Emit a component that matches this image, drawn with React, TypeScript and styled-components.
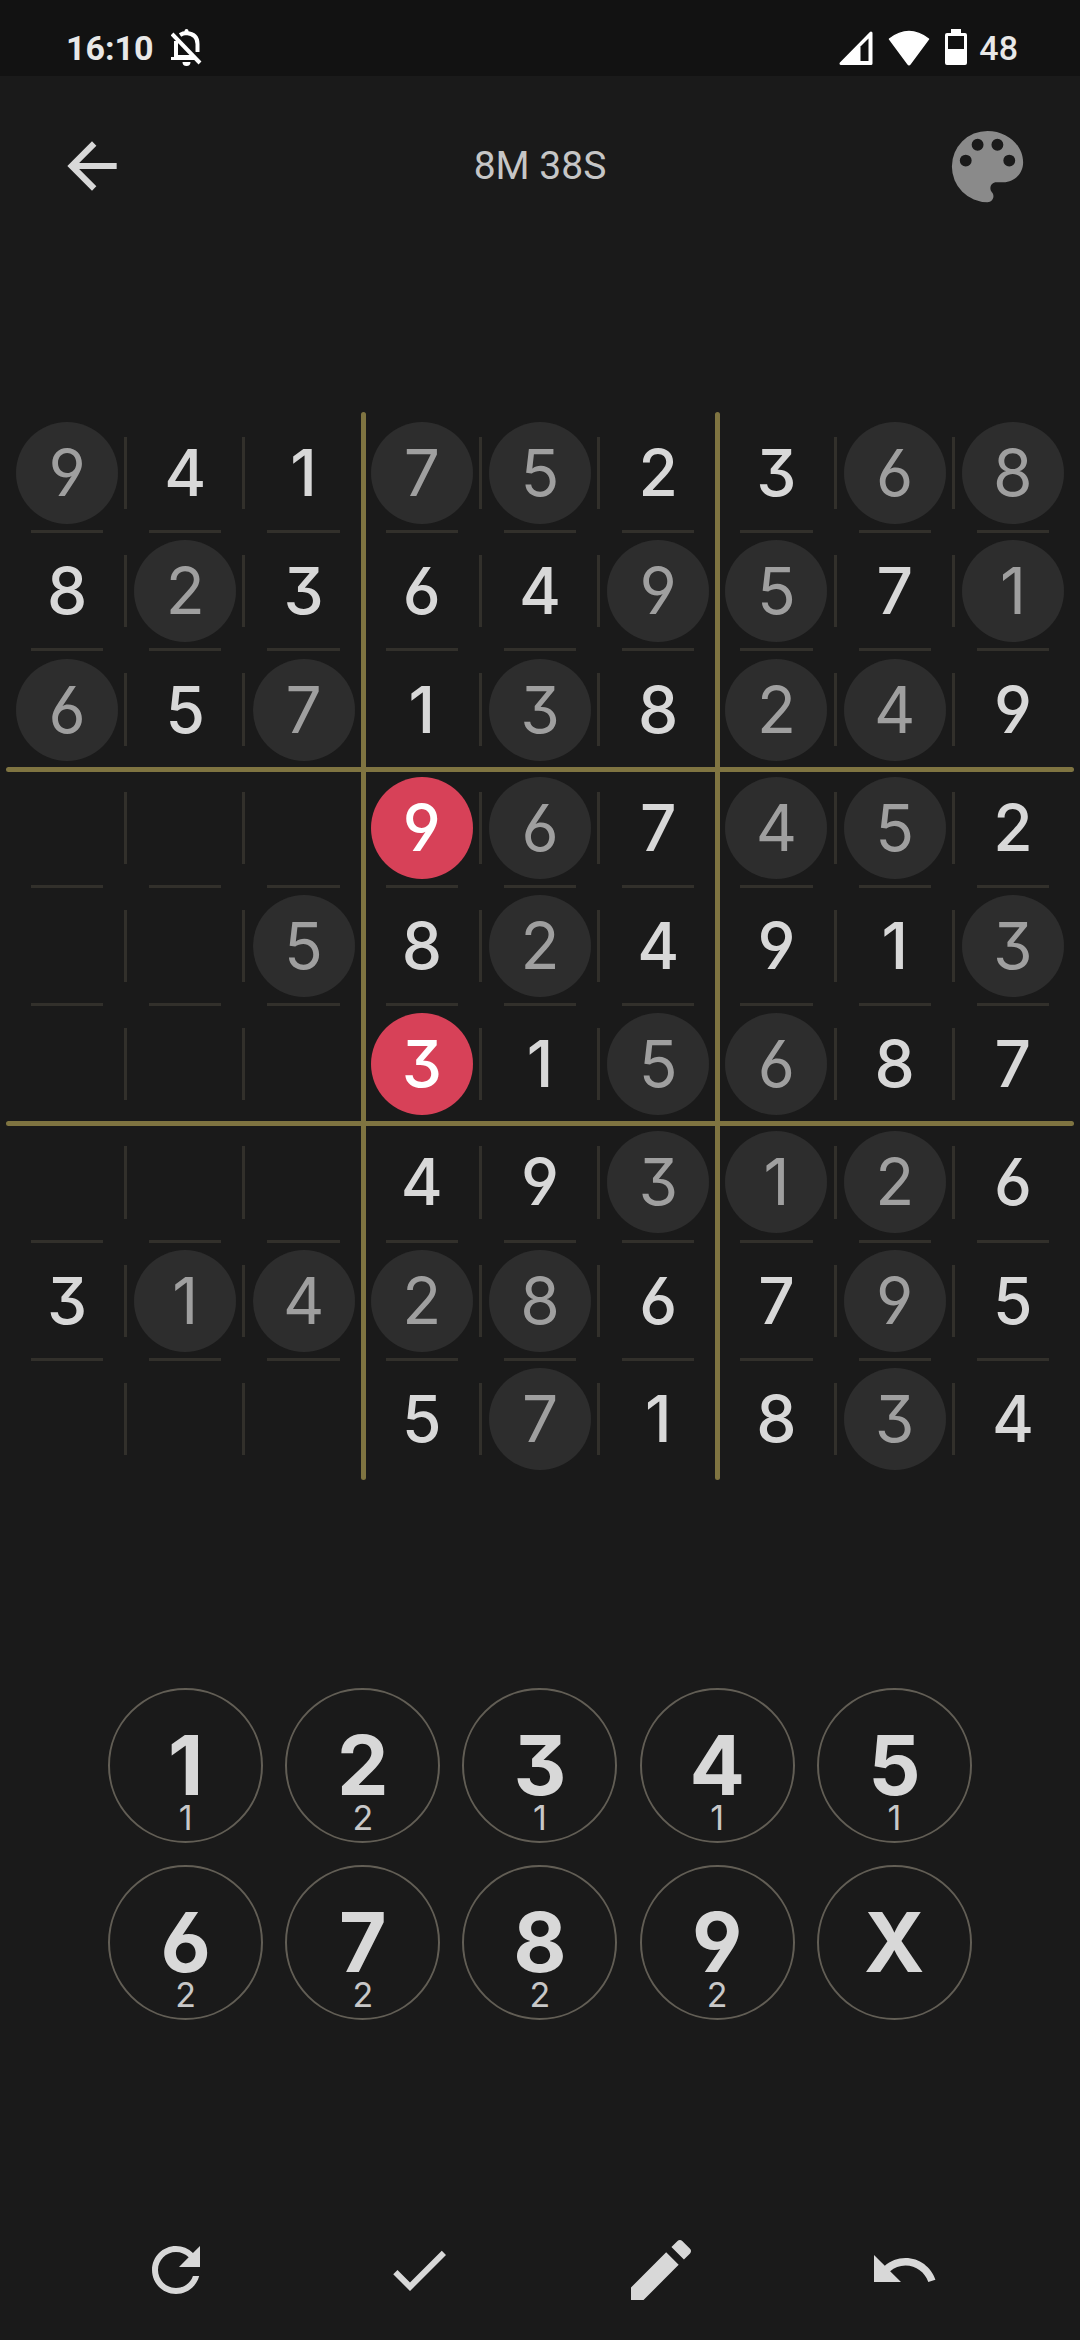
import React from 'react';
import styled, { createGlobalStyle } from 'styled-components';

const colors = {
  page: '#1a1a1a',
  status: '#121212',
  ink: '#d8d8d8',
  muted: '#9f9f9f',
  given: '#2d2d2d',
  gold: '#7f7441',
  hair: '#32302b',
  ring: '#625e55',
  selected: '#d74158',
};

const GlobalStyle = createGlobalStyle`
  *, *::before, *::after { box-sizing: border-box; }
  body { margin: 0; background: ${colors.page}; }
`;

const Screen = styled.div`
  display: flex;
  flex-direction: column;
  min-height: 100vh;
  background: ${colors.page};
  color: ${colors.ink};
  font-family: Inter, Roboto, sans-serif;
  font-feature-settings: 'cv03', 'cv04', 'cv09';
`;

const StatusBar = styled.div`
  display: flex;
  align-items: center;
  justify-content: space-between;
  height: 76px;
  padding: 20px 62px 0 66px;
  background: ${colors.status};
  color: #e8e8e8;
  font-family: Roboto, sans-serif;
  font-size: 34px;
  line-height: 40px;
`;

const StatusGroup = styled.div<{ $gap: number }>`
  display: flex;
  align-items: center;
  gap: ${(p) => p.$gap}px;
`;

const Clock = styled.time`
  font-weight: 700;
`;

const Percent = styled.span`
  font-weight: 500;
`;

const Header = styled.header`
  display: flex;
  align-items: center;
  justify-content: space-between;
  height: 180px;
  padding: 0 44px;
`;

const IconButton = styled.button<{ $dim?: boolean }>`
  display: flex;
  align-items: center;
  justify-content: center;
  width: 96px;
  height: 96px;
  padding: 0;
  border: 0;
  background: none;
  color: ${(p) => (p.$dim ? '#8a8a8a' : colors.ink)};
`;

const Timer = styled.h1`
  margin: 0;
  color: #c6c6c6;
  font-family: Roboto, sans-serif;
  font-size: 39px;
  font-weight: 400;
  line-height: 48px;
`;

const Board = styled.main`
  display: grid;
  grid-template-columns: repeat(3, 1fr);
  position: relative;
  margin: 158px 8px 0;
  aspect-ratio: 1;
`;

const Box = styled.div`
  display: grid;
  grid-template-columns: repeat(3, 1fr);
  grid-template-rows: repeat(3, 1fr);
  aspect-ratio: 1;
`;

const Cell = styled.button<{ $right: boolean; $bottom: boolean }>`
  display: flex;
  align-items: center;
  justify-content: center;
  position: relative;
  padding: 0;
  border: 0;
  background: none;
  color: inherit;
  font: inherit;
  font-feature-settings: inherit;

  &::before {
    content: ${(p) => (p.$right ? "''" : 'none')};
    position: absolute;
    right: -1px;
    top: 23px;
    bottom: 23px;
    width: 3px;
    background: ${colors.hair};
  }

  &::after {
    content: ${(p) => (p.$bottom ? "''" : 'none')};
    position: absolute;
    bottom: -1px;
    left: 23px;
    right: 23px;
    height: 3px;
    background: ${colors.hair};
  }
`;

type Kind = 'given' | 'entered' | 'selected';

const discFill = { given: colors.given, entered: 'transparent', selected: colors.selected };
const discInk = { given: colors.muted, entered: colors.ink, selected: '#ffffff' };

const Disc = styled.span<{ $kind: Kind }>`
  display: flex;
  align-items: center;
  justify-content: center;
  width: 102px;
  height: 102px;
  border-radius: 50%;
  background: ${(p) => discFill[p.$kind]};
  color: ${(p) => discInk[p.$kind]};
  font-size: 64px;
  font-weight: ${(p) => (p.$kind === 'given' ? 400 : 500)};
  line-height: 64px;
`;

const BoardLine = styled.span<{ $axis: 'x' | 'y'; $at: number }>`
  position: absolute;
  border-radius: 3px;
  background: ${colors.gold};
  ${(p) =>
    p.$axis === 'x'
      ? `left: -2px; right: -2px; height: 5px; top: calc(100% * ${p.$at} / 3 - 2px);`
      : `top: -2px; bottom: -2px; width: 5px; left: calc(100% * ${p.$at} / 3 - 2px);`}
`;

const Keypad = styled.section`
  display: grid;
  grid-template-columns: repeat(5, 1fr);
  grid-auto-rows: 177px;
  place-items: center;
  margin: 199px 97px 0;
`;

const Key = styled.button`
  display: grid;
  grid-template-rows: 1fr 84px 1fr;
  justify-items: center;
  width: 155px;
  height: 155px;
  padding: 0;
  border: 2px solid ${colors.ring};
  border-radius: 50%;
  background: none;
  color: ${colors.ink};
  font: inherit;
  font-feature-settings: inherit;
`;

const KeyLabel = styled.span`
  grid-row: 2;
  font-size: 82px;
  font-weight: 700;
  line-height: 84px;
`;

const KeyCount = styled.span`
  grid-row: 3;
  color: #c8c8c8;
  font-size: 34px;
  line-height: 20px;
`;

const Toolbar = styled.footer`
  display: grid;
  grid-template-columns: repeat(4, 1fr);
  place-items: center;
  height: 140px;
  margin-top: auto;
  padding: 0 55px;
`;

/* g: given, s: selected, digit alone: entered by the player, dot: empty */
const rows = [
  'g9 4 1 g7 g5 2 3 g6 g8',
  '8 g2 3 6 4 g9 g5 7 g1',
  'g6 5 g7 1 g3 8 g2 g4 9',
  '. . . s9 g6 7 g4 g5 2',
  '. . g5 8 g2 4 9 1 g3',
  '. . . s3 1 g5 g6 8 7',
  '. . . 4 9 g3 g1 g2 6',
  '3 g1 g4 g2 g8 6 7 g9 5',
  '. . . 5 g7 1 8 g3 4',
].map((row) => row.split(' '));

const keys = [
  ['1', '1'], ['2', '2'], ['3', '1'], ['4', '1'], ['5', '1'],
  ['6', '2'], ['7', '2'], ['8', '2'], ['9', '2'], ['X', ''],
];

const kindOf = (token: string): Kind =>
  token[0] === 'g' ? 'given' : token[0] === 's' ? 'selected' : 'entered';

const three = [0, 1, 2];

function Icon({ size, children }: { size: number; children: React.ReactNode }) {
  return (
    <svg width={size} height={size} viewBox="0 0 24 24" fill="currentColor" aria-hidden="true">
      {children}
    </svg>
  );
}

export default function App() {
  return (
    <Screen>
      <GlobalStyle />
      <StatusBar>
        <StatusGroup $gap={17}>
          <Clock>16:10</Clock>
          <svg width="31" height="38" viewBox="0 0 31 38" aria-hidden="true">
            <path d="M9 6 Q12 4 15.500 4 Q26.500 5 26.500 15 V23 M5 12 V28 H23" fill="none" stroke="#fff" strokeWidth="4" />
            <path d="M0 28 H24 V31 H0Z M13.500 3 V2 A2 2 0 0 1 17.500 2 V4Z M11.500 33 H19.500 A4 4 0 0 1 11.500 33Z" fill="#fff" />
            <path d="M3 3 L31 32" stroke={colors.status} strokeWidth="3" />
            <path d="M1 5 L29 34" stroke="#fff" strokeWidth="4" />
          </svg>
        </StatusGroup>
        <StatusGroup $gap={15}>
          <svg width="34" height="36" viewBox="0 0 34 36" aria-hidden="true">
            <path d="M2 33.500 L32 3 V33.500Z" fill="#fff" stroke="#fff" strokeWidth="3" strokeLinejoin="round" />
            <path d="M21.500 16.500 L29.500 8.500 V31 H21.500Z" fill={colors.status} />
          </svg>
          <svg width="42" height="36" viewBox="0 0 42 36" aria-hidden="true">
            <path d="M1.500 9 Q21 -6 40.500 9 L22 34 Q21 35.500 20 34Z" fill="#fff" stroke="#fff" strokeWidth="1.500" strokeLinejoin="round" />
          </svg>
          <StatusGroup $gap={12}>
            <svg width="22" height="38" viewBox="0 0 22 38" aria-hidden="true">
              <path d="M6 0 H16 V4 H20 Q22 4 22 6 V34 Q22 36 20 36 H2 Q0 36 0 34 V6 Q0 4 2 4 H6Z M3 7 V20 H19 V7Z" fill="#fff" fillRule="evenodd" />
            </svg>
            <Percent>48</Percent>
          </StatusGroup>
        </StatusGroup>
      </StatusBar>

      <Header>
        <IconButton aria-label="Back">
          <Icon size={74}>
            <path d="M20 11H7.830l5.590-5.590L12 4l-8 8 8 8 1.410-1.410L7.830 13H20v-2z" />
          </Icon>
        </IconButton>
        <Timer>8M 38S</Timer>
        <IconButton aria-label="Themes" $dim>
          <Icon size={95}>
            <path d="M12 3a9 9 0 0 0 0 18c.83 0 1.500-.67 1.500-1.500 0-.39-.15-.74-.39-1.010-.23-.26-.38-.61-.38-.99 0-.83.67-1.500 1.500-1.500H16c2.760 0 5-2.240 5-5 0-4.420-4.030-8-9-8zm-5.500 9a1.500 1.500 0 1 1 0-3 1.500 1.500 0 0 1 0 3zm3-4a1.500 1.500 0 1 1 0-3 1.500 1.500 0 0 1 0 3zm5 0a1.500 1.500 0 1 1 0-3 1.500 1.500 0 0 1 0 3zm3 4a1.500 1.500 0 1 1 0-3 1.500 1.500 0 0 1 0 3z" />
          </Icon>
        </IconButton>
      </Header>

      <Board aria-label="Sudoku board">
        {three.flatMap((br) =>
          three.map((bc) => (
            <Box key={`${br}${bc}`}>
              {three.flatMap((r) =>
                three.map((c) => {
                  const token = rows[br * 3 + r][bc * 3 + c];
                  return (
                    <Cell
                      key={`${r}${c}`}
                      $right={c < 2}
                      $bottom={r < 2}
                      aria-label={`Row ${br * 3 + r + 1}, column ${bc * 3 + c + 1}`}
                    >
                      {token !== '.' && <Disc $kind={kindOf(token)}>{token.slice(-1)}</Disc>}
                    </Cell>
                  );
                }),
              )}
            </Box>
          )),
        )}
        <BoardLine $axis="x" $at={1} />
        <BoardLine $axis="x" $at={2} />
        <BoardLine $axis="y" $at={1} />
        <BoardLine $axis="y" $at={2} />
      </Board>

      <Keypad aria-label="Number pad">
        {keys.map(([label, count]) => (
          <Key key={label}>
            <KeyLabel>{label}</KeyLabel>
            {count && <KeyCount>{count}</KeyCount>}
          </Key>
        ))}
      </Keypad>

      <Toolbar>
        <IconButton aria-label="Restart">
          <Icon size={72}>
            <path d="M17.650 6.350A7.958 7.958 0 0 0 12 4c-4.420 0-7.990 3.580-7.990 8s3.570 8 7.990 8c3.730 0 6.840-2.550 7.730-6h-2.080A5.990 5.990 0 0 1 12 18c-3.310 0-6-2.690-6-6s2.690-6 6-6c1.660 0 3.140.69 4.220 1.780L13 11h7V4l-2.350 2.350z" />
          </Icon>
        </IconButton>
        <IconButton aria-label="Check">
          <Icon size={72}>
            <path d="M9 16.170L4.830 12l-1.420 1.410L9 19 21 7l-1.410-1.410L9 16.170z" />
          </Icon>
        </IconButton>
        <IconButton aria-label="Notes">
          <Icon size={80}>
            <path d="M3 17.250V21h3.750L17.300 10.450l-3.750-3.750L3 17.250zM20.710 7.040c.39-.39.39-1.020 0-1.410l-2.340-2.340c-.39-.39-1.020-.39-1.410 0l-1.830 1.830 3.750 3.750 1.830-1.830z" />
          </Icon>
        </IconButton>
        <IconButton aria-label="Undo">
          <Icon size={72}>
            <path d="M12.500 8c-2.650 0-5.050.99-6.900 2.600L2 7v9h9l-3.620-3.620c1.390-1.160 3.160-1.880 5.120-1.880 3.540 0 6.550 2.310 7.600 5.500l2.370-.78C21.080 11.030 17.150 8 12.500 8z" />
          </Icon>
        </IconButton>
      </Toolbar>
    </Screen>
  );
}
